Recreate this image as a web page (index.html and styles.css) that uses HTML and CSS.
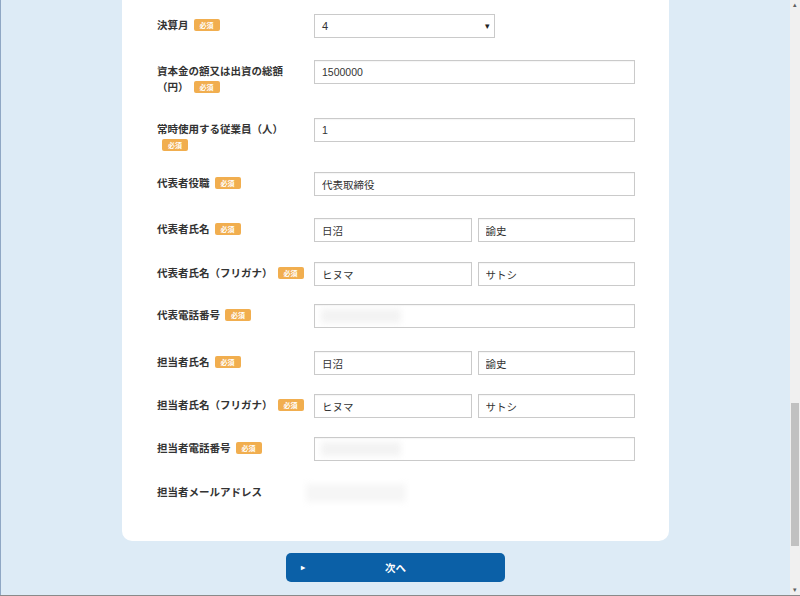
FILE: index.html
```html
<!DOCTYPE html>
<html lang="ja">
<head>
<meta charset="utf-8">
<title>会社情報入力</title>
<link rel="stylesheet" href="styles.css">
</head>
<body>
<div class="window">
  <div class="viewport">
    <div class="card">
      <div class="form">
        <div class="label">決算月<span class="req">必須</span></div>
        <div class="field"><div class="select"><span>4</span><span class="caret">▾</span></div></div>

        <div class="label">資本金の額又は出資の総額<br>（円）<span class="req">必須</span></div>
        <div class="field"><input class="input" type="text" value="1500000"></div>

        <div class="label">常時使用する従業員（人）<br><span class="req">必須</span></div>
        <div class="field"><input class="input" type="text" value="1"></div>

        <div class="label">代表者役職<span class="req">必須</span></div>
        <div class="field"><input class="input" type="text" value="代表取締役"></div>

        <div class="label">代表者氏名<span class="req">必須</span></div>
        <div class="field pair"><input class="input" type="text" value="日沼"><input class="input" type="text" value="諭史"></div>

        <div class="label">代表者氏名（フリガナ）<span class="req">必須</span></div>
        <div class="field pair"><input class="input" type="text" value="ヒヌマ"><input class="input" type="text" value="サトシ"></div>

        <div class="label">代表電話番号<span class="req">必須</span></div>
        <div class="field"><div class="input"><span class="blur"></span></div></div>

        <div class="label">担当者氏名<span class="req">必須</span></div>
        <div class="field pair"><input class="input" type="text" value="日沼"><input class="input" type="text" value="諭史"></div>

        <div class="label">担当者氏名（フリガナ）<span class="req">必須</span></div>
        <div class="field pair"><input class="input" type="text" value="ヒヌマ"><input class="input" type="text" value="サトシ"></div>

        <div class="label">担当者電話番号<span class="req">必須</span></div>
        <div class="field"><div class="input"><span class="blur"></span></div></div>

        <div class="label">担当者メールアドレス</div>
        <div class="field"><div class="static"><span class="blur wide"></span></div></div>
      </div>
    </div>
    <div class="actions">
      <button class="next" type="button"><span class="tri">▸</span><span>次へ</span></button>
    </div>
  </div>
  <div class="scrollbar">
    <span class="arrow">▴</span>
    <div class="track"><div class="thumb"></div></div>
    <span class="arrow">▾</span>
  </div>
</div>
<div class="bottom-line"></div>
</body>
</html>
```
FILE: styles.css
```css
* { box-sizing: border-box; }
html, body { margin: 0; padding: 0; }
body {
  width: 800px;
  height: 596px;
  overflow: hidden;
  background: #ddebf6;
  font-family: "Liberation Sans", "Noto Sans CJK JP", sans-serif;
  color: #333;
}
.window {
  display: flex;
  height: 595px;
}
.viewport {
  flex: 1;
  display: flex;
  flex-direction: column;
  align-items: center;
  border-left: 1px solid #8fa7c4;
}
.card {
  width: 547px;
  height: 541px;
  background: #fff;
  border-radius: 0 0 10px 10px;
  padding: 14px 34px 0 35px;
}
.form {
  display: grid;
  grid-template-columns: 157px 1fr;
  grid-template-rows: 46px 58px 54px 46px 44px 42px 47px 43px 43px 44px auto;
  align-items: start;
}
.label {
  font-family: "Noto Sans CJK JP", sans-serif;
  font-size: 10.5px;
  font-weight: bold;
  line-height: 16px;
  padding-top: 3px;
  color: #333;
}
.req {
  display: inline-block;
  vertical-align: middle;
  margin-left: 5px;
  width: 26px;
  height: 12px;
  line-height: 12px;
  border-radius: 2px;
  background: #f1ae4f;
  color: #fff;
  font-size: 7px;
  text-align: center;
  position: relative;
  top: -1px;
}
.field { display: block; }
.field.pair { display: flex; gap: 6px; }
.input {
  display: block;
  width: 100%;
  height: 24px;
  margin: 0;
  border: 1px solid #cacaca;
  border-radius: 0;
  padding: 0 7px;
  background: #fff;
  font-family: "Liberation Sans", "Noto Sans CJK JP", sans-serif;
  font-size: 10.5px;
  color: #333;
  box-shadow: inset 0 1px 1px rgba(0,0,0,0.04);
}
.pair .input { flex: 1; min-width: 0; }
div.input { position: relative; overflow: hidden; }
.select {
  width: 181px;
  height: 24px;
  border: 1px solid #cacaca;
  display: flex;
  align-items: center;
  justify-content: space-between;
  padding: 0 4px 0 7px;
  font-size: 11px;
  color: #333;
}
.caret { font-size: 9px; color: #222; }
.blur {
  display: block;
  position: absolute;
  left: 6px;
  top: 4px;
  width: 80px;
  height: 14px;
  background: #f3f3f3;
  filter: blur(3px);
}
.static {
  position: relative;
  height: 24px;
}
.blur.wide {
  left: -8px;
  top: 3px;
  width: 100px;
  height: 18px;
  background: #f6f6f6;
}
.actions { margin-top: 12px; }
.next {
  width: 219px;
  height: 29px;
  border: none;
  border-radius: 5px;
  background: #0b60a7;
  color: #fff;
  font-family: "Noto Sans CJK JP", sans-serif;
  font-size: 10.5px;
  font-weight: bold;
  display: flex;
  align-items: center;
  justify-content: center;
  position: relative;
  padding: 0;
  cursor: pointer;
}
.tri {
  position: absolute;
  left: 15px;
  top: 8px;
  font-size: 8px;
}
.scrollbar {
  width: 10px;
  background: #f0f0f0;
  display: flex;
  flex-direction: column;
  align-items: center;
}
.arrow {
  font-size: 7px;
  line-height: 10px;
  height: 10px;
  color: #606060;
}
.track {
  flex: 1;
  width: 100%;
  position: relative;
}
.thumb {
  position: absolute;
  left: 1px;
  right: 1px;
  top: 393px;
  height: 143px;
  background: #c1c1c1;
}
.bottom-line {
  height: 1px;
  background: #8a8a8a;
}
```
